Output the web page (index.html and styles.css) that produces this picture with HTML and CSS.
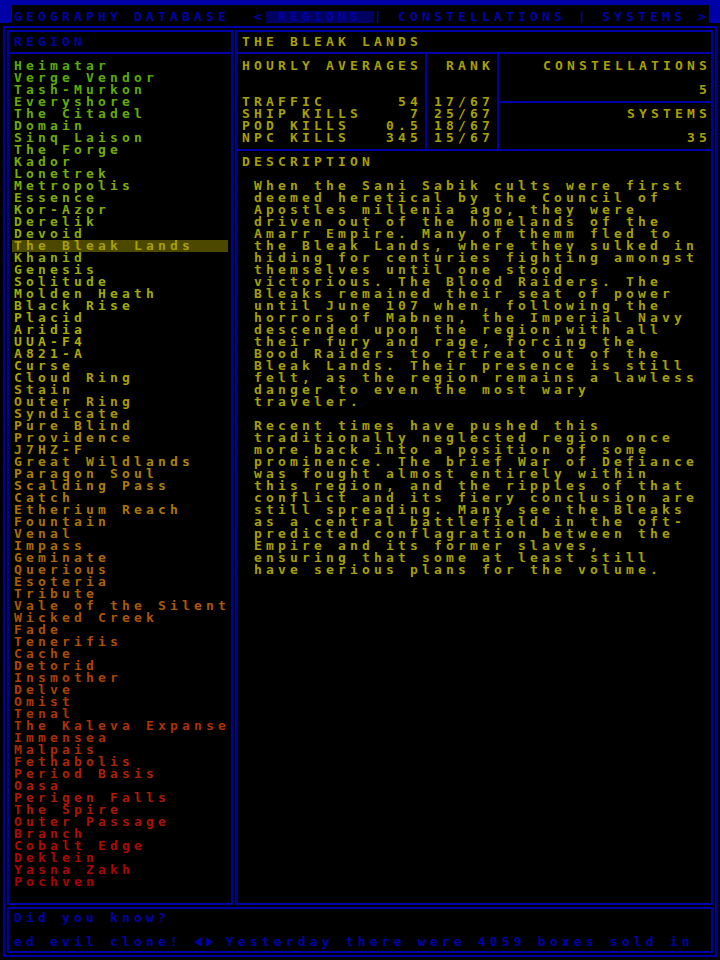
FILE: index.html
```html
<!DOCTYPE html>
<html lang="en">
<head>
<meta charset="utf-8">
<title>Geography Database</title>
<link rel="stylesheet" href="styles.css">
</head>
<body>
<div class="screen">
  <header class="topbar">
    <div class="cap cap-left"></div>
    <div class="title">GEOGRAPHY DATABASE  &lt;<span class="tab-active"> REGIONS </span>| CONSTELLATIONS | SYSTEMS &gt;</div>
    <div class="cap cap-right"></div>
  </header>
  <div class="frame">
    <div class="panels">
      <section class="panel regions">
        <div class="panel-head blue">REGION</div>
        <ul class="region-list">
          <li style="color:hsl(90 100% 34%)">Heimatar</li>
          <li style="color:hsl(88.7 100% 34%)">Verge Vendor</li>
          <li style="color:hsl(87.4 100% 34%)">Tash-Murkon</li>
          <li style="color:hsl(86 100% 34%)">Everyshore</li>
          <li style="color:hsl(84.7 100% 34%)">The Citadel</li>
          <li style="color:hsl(83.4 100% 34%)">Domain</li>
          <li style="color:hsl(82.1 100% 34%)">Sinq Laison</li>
          <li style="color:hsl(80.7 100% 34%)">The Forge</li>
          <li style="color:hsl(79.4 100% 34%)">Kador</li>
          <li style="color:hsl(78.1 100% 34%)">Lonetrek</li>
          <li style="color:hsl(76.8 100% 34%)">Metropolis</li>
          <li style="color:hsl(75.4 100% 34%)">Essence</li>
          <li style="color:hsl(74.1 100% 34%)">Kor-Azor</li>
          <li style="color:hsl(72.8 100% 34%)">Derelik</li>
          <li style="color:hsl(71.5 100% 34%)">Devoid</li>
          <li class="selected">The Bleak Lands</li>
          <li style="color:hsl(68.8 100% 34%)">Khanid</li>
          <li style="color:hsl(67.5 100% 34%)">Genesis</li>
          <li style="color:hsl(66.2 100% 34%)">Solitude</li>
          <li style="color:hsl(64.9 100% 34%)">Molden Heath</li>
          <li style="color:hsl(63.5 100% 34%)">Black Rise</li>
          <li style="color:hsl(62.2 100% 34%)">Placid</li>
          <li style="color:hsl(60.9 100% 34%)">Aridia</li>
          <li style="color:hsl(59.6 100% 34%)">UUA-F4</li>
          <li style="color:hsl(58.2 100% 34%)">A821-A</li>
          <li style="color:hsl(56.9 100% 34%)">Curse</li>
          <li style="color:hsl(55.6 100% 34%)">Cloud Ring</li>
          <li style="color:hsl(54.3 100% 34%)">Stain</li>
          <li style="color:hsl(52.9 100% 34%)">Outer Ring</li>
          <li style="color:hsl(51.6 100% 34%)">Syndicate</li>
          <li style="color:hsl(50.3 100% 34%)">Pure Blind</li>
          <li style="color:hsl(49 100% 34%)">Providence</li>
          <li style="color:hsl(47.6 100% 34%)">J7HZ-F</li>
          <li style="color:hsl(46.3 100% 34%)">Great Wildlands</li>
          <li style="color:hsl(45 100% 34%)">Paragon Soul</li>
          <li style="color:hsl(43.7 100% 34%)">Scalding Pass</li>
          <li style="color:hsl(42.4 100% 34%)">Catch</li>
          <li style="color:hsl(41 100% 34%)">Etherium Reach</li>
          <li style="color:hsl(39.7 100% 34%)">Fountain</li>
          <li style="color:hsl(38.4 100% 34%)">Venal</li>
          <li style="color:hsl(37.1 100% 34%)">Impass</li>
          <li style="color:hsl(35.7 100% 34%)">Geminate</li>
          <li style="color:hsl(34.4 100% 34%)">Querious</li>
          <li style="color:hsl(33.1 100% 34%)">Esoteria</li>
          <li style="color:hsl(31.8 100% 34%)">Tribute</li>
          <li style="color:hsl(30.4 100% 34%)">Vale of the Silent</li>
          <li style="color:hsl(29.1 100% 34%)">Wicked Creek</li>
          <li style="color:hsl(27.8 100% 34%)">Fade</li>
          <li style="color:hsl(26.5 100% 34%)">Tenerifis</li>
          <li style="color:hsl(25.1 100% 34%)">Cache</li>
          <li style="color:hsl(23.8 100% 34%)">Detorid</li>
          <li style="color:hsl(22.5 100% 34%)">Insmother</li>
          <li style="color:hsl(21.2 100% 34%)">Delve</li>
          <li style="color:hsl(19.9 100% 34%)">Omist</li>
          <li style="color:hsl(18.5 100% 34%)">Tenal</li>
          <li style="color:hsl(17.2 100% 34%)">The Kaleva Expanse</li>
          <li style="color:hsl(15.9 100% 34%)">Immensea</li>
          <li style="color:hsl(14.6 100% 34%)">Malpais</li>
          <li style="color:hsl(13.2 100% 34%)">Fethabolis</li>
          <li style="color:hsl(11.9 100% 34%)">Period Basis</li>
          <li style="color:hsl(10.6 100% 34%)">Oasa</li>
          <li style="color:hsl(9.3 100% 34%)">Perigen Falls</li>
          <li style="color:hsl(7.9 100% 34%)">The Spire</li>
          <li style="color:hsl(6.6 100% 34%)">Outer Passage</li>
          <li style="color:hsl(5.3 100% 34%)">Branch</li>
          <li style="color:hsl(4 100% 34%)">Cobalt Edge</li>
          <li style="color:hsl(2.6 100% 34%)">Deklein</li>
          <li style="color:hsl(1.3 100% 34%)">Yasna Zakh</li>
          <li style="color:hsl(0 100% 34%)">Pochven</li>
        </ul>
      </section>
      <section class="panel detail">
        <div class="panel-head">THE BLEAK LANDS</div>
        <div class="stats">
          <div class="col averages">
            <div class="line">HOURLY AVERAGES</div>
            <div class="rows">
              <div class="row"><span class="line">TRAFFIC</span><span class="line">54</span></div>
              <div class="row"><span class="line">SHIP KILLS</span><span class="line">7</span></div>
              <div class="row"><span class="line">POD KILLS</span><span class="line">0.5</span></div>
              <div class="row"><span class="line">NPC KILLS</span><span class="line">345</span></div>
            </div>
          </div>
          <div class="col rank">
            <div class="line">RANK</div>
            <div class="rows">
              <div class="line">17/67</div>
              <div class="line">25/67</div>
              <div class="line">18/67</div>
              <div class="line">15/67</div>
            </div>
          </div>
          <div class="col counts">
            <div class="count-box first">
              <div class="line">CONSTELLATIONS</div>
              <div class="line count-value">5</div>
            </div>
            <div class="count-box">
              <div class="line">SYSTEMS</div>
              <div class="line count-value">35</div>
            </div>
          </div>
        </div>
        <div class="description">
          <div class="line">DESCRIPTION</div>
          <p class="para">When the Sani Sabik cults were first
deemed heretical by the Council of
Apostles millenia ago, they were
driven out of the homelands of the
Amarr Empire. Many of themm fled to
the Bleak Lands, where they sulked in
hiding for centuries fighting amongst
themselves until one stood
victorious. The Blood Raiders. The
Bleaks remained their seat of power
until June 107 when, following the
horrors of Mabnen, the Imperial Navy
descended upon the region with all
their fury and rage, forcing the
Bood Raiders to retreat out of the
Bleak Lands. Their presence is still
felt, as the region remains a lawless
danger to even the most wary
traveler.</p>
          <p class="para">Recent times have pushed this
traditionally neglected region once
more back into a position of some
prominence. The brief War of Defiance
was fought almost entirely within
this region, and the ripples of that
conflict and its fiery conclusion are
still spreading. Many see the Bleaks
as a central battlefield in the oft-
predicted conflagration between the
Empire and its former slaves,
ensuring that some at least still
have serious plans for the volume.</p>
        </div>
      </section>
    </div>
    <footer class="panel ticker">
      <div class="line">Did you know?</div>
      <div class="line ticker-line">ed evil clone! <svg class="arrows" width="24" height="12" viewBox="0 0 24 12" aria-hidden="true"><polygon points="0,6 7,1.5 7,10.5" fill="#0000aa"/><polygon points="12,1.5 19,6 12,10.5" fill="#0000aa"/></svg> Yesterday there were 4059 boxes sold in</div>
    </footer>
  </div>
</div>
</body>
</html>
```
FILE: styles.css
```css
* {
  box-sizing: border-box;
  margin: 0;
  padding: 0;
}

html,
body {
  background: #000;
}

body {
  width: 720px;
  height: 960px;
  overflow: hidden;
  font-family: "DejaVu Sans Mono", "Liberation Mono", monospace;
  font-weight: bold;
  font-size: 13px;
  line-height: 12px;
  letter-spacing: calc(12px - 1ch);
  color: #a8a000;
}

.screen {
  width: 720px;
  height: 960px;
}

.line {
  white-space: pre;
}

/* ---------- top title bar ---------- */
.topbar {
  display: flex;
  height: 23px;
}

.cap {
  background: #0000a8;
}

.cap-left {
  width: 12px;
}

.cap-right {
  width: 11px;
}

.title {
  flex: 1;
  border-top: 5px solid #0000a8;
  padding: 6px 0 0 2px;
  white-space: pre;
  color: #0000aa;
  overflow: hidden;
}

.tab-active {
  display: inline-block;
  background: #000060;
  line-height: 12px;
  height: 12px;
  vertical-align: top;
}

/* ---------- outer frame ---------- */
.frame {
  margin: 3px 0 0 3px;
  width: 714px;
  height: 931px;
  border: 2px solid #0000a8;
  padding: 2px;
  display: flex;
  flex-direction: column;
  gap: 2px;
}

.panels {
  display: flex;
  gap: 2px;
  height: 875px;
}

.panel {
  border: 2px solid #0000a8;
}

.panel-head {
  padding: 4px 5px;
  border-bottom: 2px solid #0000a8;
  white-space: pre;
}

.blue {
  color: #0000aa;
}

/* ---------- region list ---------- */
.regions {
  width: 226px;
  display: flex;
  flex-direction: column;
  overflow: hidden;
}

.region-list {
  list-style: none;
  padding: 6px 3px;
}

.region-list li {
  padding-left: 2px;
  height: 12px;
  white-space: pre;
}

.region-list li.selected {
  background: #4c4800;
  color: #a8a000;
}

/* ---------- detail panel ---------- */
.detail {
  flex: 1;
  display: flex;
  flex-direction: column;
  overflow: hidden;
}

.stats {
  display: flex;
  height: 97px;
  border-bottom: 2px solid #0000a8;
}

.averages {
  width: 190px;
  border-right: 2px solid #0000a8;
  padding: 6px 3px 0 5px;
}

.rows {
  margin-top: 24px;
}

.row {
  display: flex;
  justify-content: space-between;
}

.rank {
  width: 72px;
  border-right: 2px solid #0000a8;
  padding: 6px 3px 0 7px;
  text-align: right;
}

.counts {
  flex: 1;
  display: flex;
  flex-direction: column;
  text-align: right;
}

.count-box {
  flex: 1;
  padding: 5px 0 0 0;
}

.count-box.first {
  flex: 0 0 49px;
  padding-top: 6px;
  border-bottom: 2px solid #0000a8;
}

.count-value {
  margin-top: 12px;
}

.description {
  padding: 5px 5px;
}

.para {
  white-space: pre;
  padding-left: 12px;
  margin-top: 12px;
}

/* ---------- ticker ---------- */
.ticker {
  height: 46px;
  padding: 3px 5px;
  overflow: hidden;
  color: #0000aa;
}

.ticker-line {
  margin-top: 12px;
}

.arrows {
  display: inline-block;
  vertical-align: top;
  margin-right: calc(1ch - 12px);
}
```
